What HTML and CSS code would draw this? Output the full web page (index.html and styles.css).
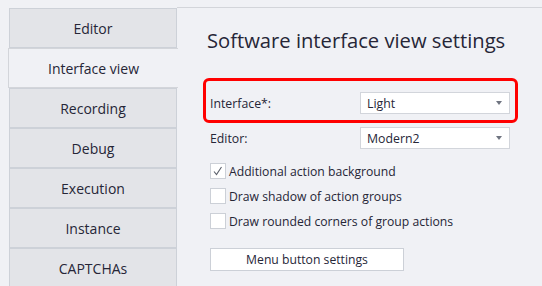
FILE: index.html
```html
<!DOCTYPE html>
<html>
<head>
<meta charset="utf-8">
<link rel="stylesheet" href="styles.css">
</head>
<body>
<div class="page">
  <nav class="tabs">
    <div class="tab">Editor</div>
    <div class="tab active">Interface view</div>
    <div class="tab">Recording</div>
    <div class="tab">Debug</div>
    <div class="tab">Execution</div>
    <div class="tab">Instance</div>
    <div class="tab">CAPTCHAs</div>
  </nav>
  <main class="panel">
    <h1 class="title">Software interface view settings</h1>
    <div class="highlight">
      <div class="row">
        <span class="label">Interface*:</span>
        <div class="select"><span>Light</span><span class="arrow"></span></div>
      </div>
    </div>
    <div class="row plain">
      <span class="label">Editor:</span>
      <div class="select"><span>Modern2</span><span class="arrow"></span></div>
    </div>
    <div class="checks">
      <label class="check"><span class="box"><svg width="14" height="14" viewBox="0 0 14 14"><polyline points="3,7.5 5.5,10.5 10.5,3" fill="none" stroke="#5a5f6a" stroke-width="1.1"/></svg></span>Additional action background</label>
      <label class="check"><span class="box"></span>Draw shadow of action groups</label>
      <label class="check"><span class="box"></span>Draw rounded corners of group actions</label>
    </div>
    <button class="btn">Menu button settings</button>
  </main>
</div>
</body>
</html>
```

FILE: styles.css
```css
html, body {
  margin: 0;
  padding: 0;
  background: #f0f1f5;
  color: #262637;
  font-family: "Open Sans", "Noto Sans", sans-serif;
}
.page {
  display: flex;
  padding-top: 7px;
  height: 279px;
  overflow: hidden;
}
.tabs {
  width: 177px;
  flex: none;
  padding-top: 1px;
  display: flex;
  flex-direction: column;
}
.tab {
  box-sizing: border-box;
  height: 40px;
  margin-left: 9px;
  width: 168px;
  background: #e3e4e8;
  border: 1px solid #cdd1d8;
  display: flex;
  align-items: center;
  justify-content: center;
  font-size: 14px;
  flex: none;
}
.tab.active {
  margin-left: 8px;
  width: 170px;
  background: #f0f1f5;
  border-right: none;
  border-color: #d3d5da;
}
.panel {
  flex: 1;
  border-top: 1px solid #d3d5da;
  padding: 18px 0 0 26px;
}
.title {
  margin: 0 0 24px 4px;
  font-size: 20.2px;
  font-weight: 400;
  line-height: 28px;
  color: #262637;
}
.highlight {
  box-sizing: border-box;
  width: 315px;
  border: 3px solid #ff0000;
  border-radius: 6px;
  padding: 11px 0 6px 4px;
}
.row {
  display: flex;
  align-items: center;
  font-size: 12.3px;
}
.row.plain {
  margin-top: 4px;
  padding-left: 7px;
}
.label {
  width: 150px;
  flex: none;
}
.select {
  box-sizing: border-box;
  width: 150px;
  height: 22px;
  background: #ffffff;
  border: 1px solid #d2d5db;
  display: flex;
  align-items: center;
  justify-content: space-between;
  padding: 0 6px 0 6px;
  font-size: 12.3px;
}
.arrow {
  width: 0;
  height: 0;
  border-left: 3.5px solid transparent;
  border-right: 3.5px solid transparent;
  border-top: 4px solid #6f7480;
  margin-right: 1px;
}
.checks {
  margin-top: 14px;
  padding-left: 7px;
  display: flex;
  flex-direction: column;
  gap: 9px;
}
.check {
  display: flex;
  align-items: center;
  gap: 3px;
  font-size: 12.2px;
  height: 16px;
}
.box {
  box-sizing: border-box;
  width: 16px;
  height: 16px;
  background: #ffffff;
  border: 1px solid #ccd0d7;
  display: flex;
  align-items: center;
  justify-content: center;
  flex: none;
}
.btn {
  display: block;
  margin: 19px 0 0 7px;
  box-sizing: border-box;
  width: 194px;
  height: 23px;
  background: #ffffff;
  border: 1px solid #ccd0d7;
  font-family: inherit;
  font-size: 12.2px;
  color: #262637;
  padding: 0;
}
```
